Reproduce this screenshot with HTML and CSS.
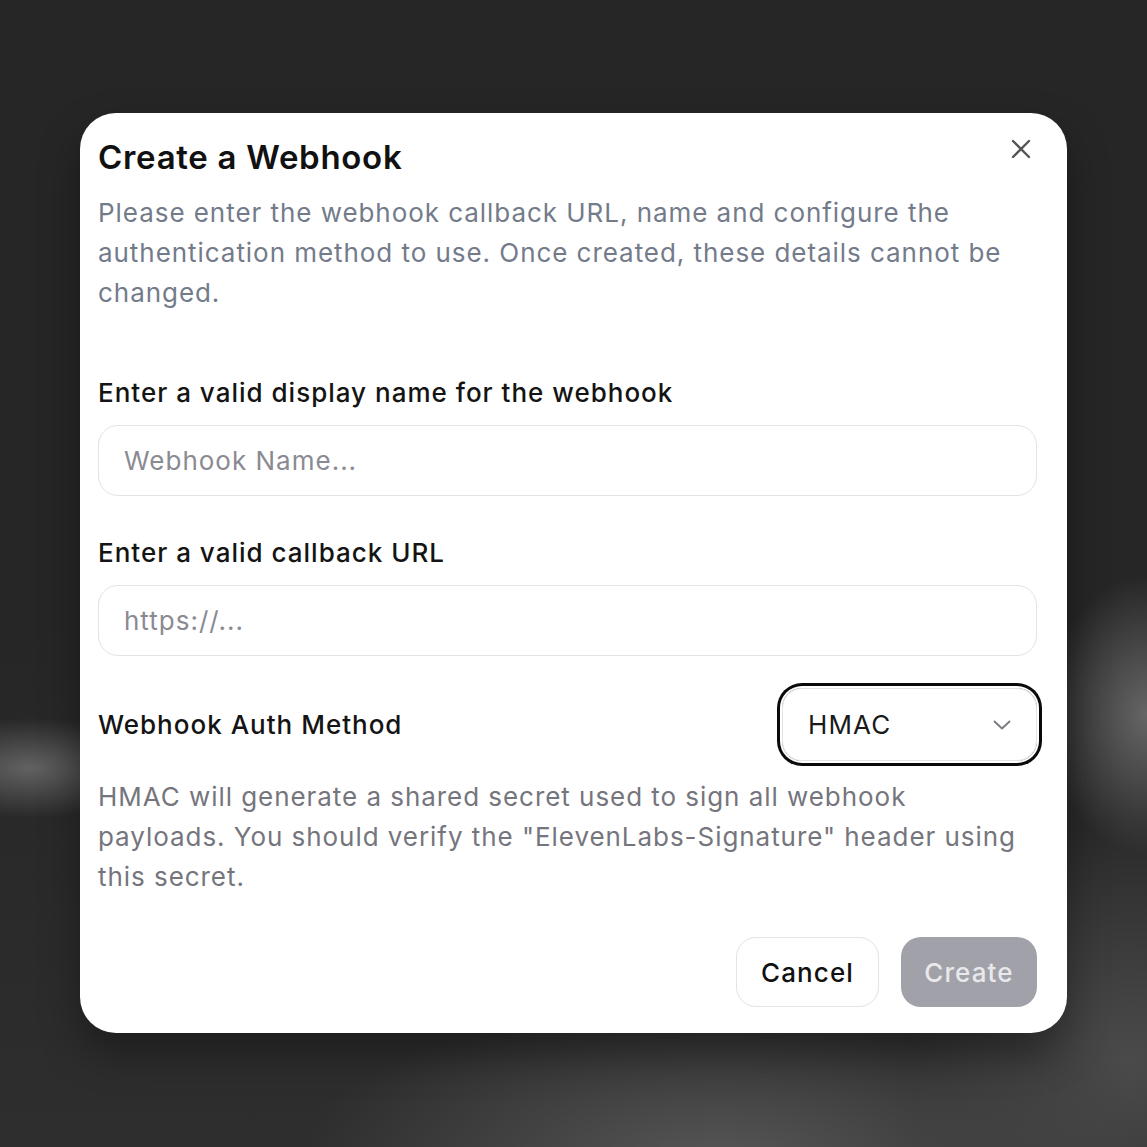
FILE: index.html
```html
<!DOCTYPE html>
<html lang="en">
<head>
<meta charset="utf-8">
<title>Create a Webhook</title>
<link rel="stylesheet" href="styles.css">
</head>
<body>
<div class="stage">
  <div class="modal">
    <button class="close" aria-label="Close">
      <svg width="24" height="24" viewBox="0 0 24 24" fill="none" stroke="#555" stroke-width="2.4" stroke-linecap="round"><path d="M4 4L20 20M20 4L4 20"/></svg>
    </button>
    <h1 class="title">Create a Webhook</h1>
    <p class="desc">Please enter the webhook callback URL, name and configure the authentication method to use. Once created, these details cannot be changed.</p>

    <label class="label first">Enter a valid display name for the webhook</label>
    <div class="input"><span class="placeholder">Webhook Name...</span></div>

    <label class="label second">Enter a valid callback URL</label>
    <div class="input"><span class="placeholder">https://...</span></div>

    <div class="auth-row">
      <span class="label">Webhook Auth Method</span>
      <div class="select">
        <span>HMAC</span>
        <svg width="22" height="22" viewBox="0 0 22 22" fill="none" stroke="#7a7a80" stroke-width="1.9" stroke-linecap="round" stroke-linejoin="round"><path d="M3.5 7.5L11 14.5L18.5 7.5"/></svg>
      </div>
    </div>

    <p class="help">HMAC will generate a shared secret used to sign all webhook payloads. You should verify the "ElevenLabs-Signature" header using this secret.</p>

    <div class="actions">
      <button class="btn cancel">Cancel</button>
      <button class="btn create">Create</button>
    </div>
  </div>
</div>
</body>
</html>
```
FILE: styles.css
```css
* { box-sizing: border-box; }
html, body { margin: 0; padding: 0; }
body {
  width: 1147px;
  height: 1147px;
  overflow: hidden;
  font-family: "Inter", "Liberation Sans", sans-serif;
  background-color: #262626;
  background-image:
    radial-gradient(ellipse 120px 50px at 30px 768px, rgba(112,112,112,0.8), rgba(38,38,38,0) 100%),
    radial-gradient(ellipse 100px 140px at 1147px 715px, rgba(108,108,108,0.9), rgba(38,38,38,0) 100%),
    radial-gradient(ellipse 420px 160px at 720px 1160px, rgba(90,90,90,0.9), rgba(38,38,38,0) 100%),
    radial-gradient(ellipse 220px 240px at 1130px 1060px, rgba(82,82,82,0.8), rgba(38,38,38,0) 100%),
    linear-gradient(180deg, #262626 0%, #262626 55%, #2e2e2e 100%);
}
.stage {
  padding: 113px 80px 0 80px;
}
.modal {
  position: relative;
  width: 987px;
  height: 920px;
  background: #fff;
  border-radius: 36px;
  padding: 23px 30px 26px 18px;
  box-shadow: 0 20px 40px rgba(0,0,0,0.35);
}
.close {
  position: absolute;
  top: 24px;
  right: 34px;
  width: 24px;
  height: 24px;
  padding: 0;
  border: 0;
  background: none;
  display: flex;
}
.title {
  margin: 0;
  font-size: 33px;
  line-height: 42px;
  font-weight: 600;
  letter-spacing: 0.7px;
  color: #111;
}
.desc {
  margin: 15px 0 0 0;
  font-size: 26px;
  line-height: 40px;
  color: #737b8a;
  letter-spacing: 0.95px;
}
.label {
  display: block;
  font-size: 26px;
  line-height: 40px;
  font-weight: 500;
  color: #141414;
  letter-spacing: 1px;
}
.label.first { margin-top: 60px; }
.label.second { margin-top: 37px; }
.input {
  margin-top: 12px;
  height: 71px;
  border: 1.5px solid #e3e3e6;
  border-radius: 20px;
  padding: 0 25px;
  display: flex;
  align-items: center;
}
.placeholder {
  font-size: 26px;
  color: #8a8a93;
  letter-spacing: 1px;
}
.auth-row {
  margin-top: 32px;
  display: flex;
  align-items: center;
  justify-content: space-between;
}
.select {
  width: 255px;
  height: 73px;
  border: 1.5px solid #e3e3e6;
  border-radius: 20px;
  padding: 0 23px 0 25px;
  display: flex;
  align-items: center;
  justify-content: space-between;
  font-size: 26px;
  letter-spacing: 1.1px;
  color: #1a1a1a;
  box-shadow: 0 0 0 2px #fff, 0 0 0 5px #0a0a0a;
}
.help {
  margin: 16px 0 0 0;
  font-size: 26px;
  line-height: 40px;
  color: #75757d;
  letter-spacing: 0.95px;
}
.actions {
  margin-top: 40px;
  display: flex;
  justify-content: flex-end;
  gap: 22px;
}
.btn {
  height: 70px;
  border-radius: 20px;
  font-family: inherit;
  font-size: 26px;
  font-weight: 500;
  letter-spacing: 1.1px;
  padding: 0;
}
.cancel {
  width: 143px;
  background: #fff;
  border: 1.5px solid #e3e3e6;
  color: #111;
}
.create {
  width: 136px;
  background: #a1a1a9;
  border: 0;
  color: #e9e9ec;
}
```
